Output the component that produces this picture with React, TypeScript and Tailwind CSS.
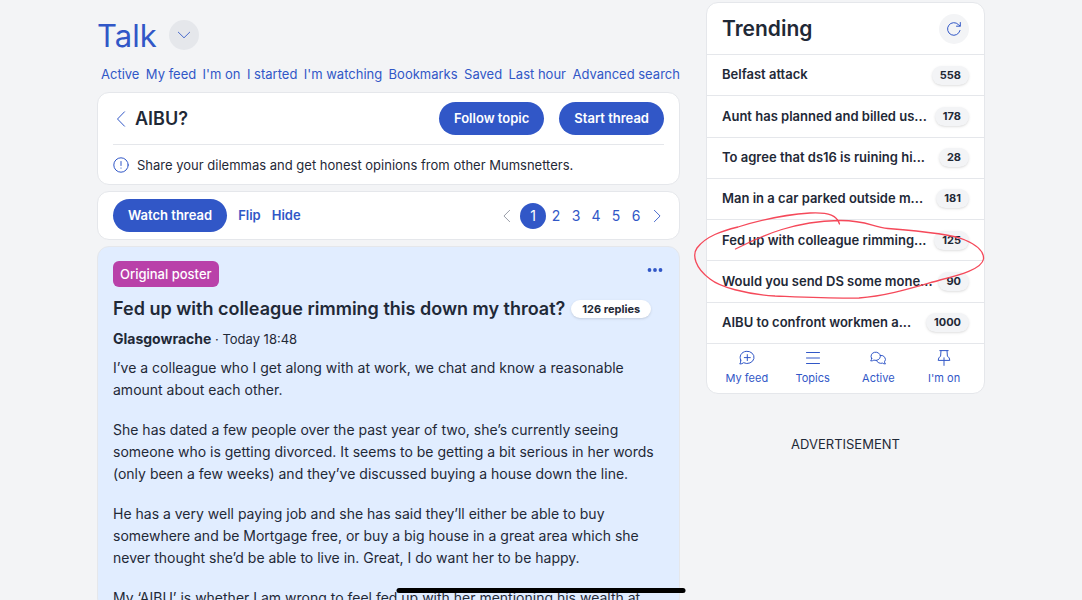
import React from "react";

const navLinks = ["Active", "My feed", "I'm on", "I started", "I'm watching", "Bookmarks", "Saved", "Last hour", "Advanced search"];

const trending = [
  { title: "Belfast attack", count: 558 },
  { title: "Aunt has planned and billed us...", count: 178 },
  { title: "To agree that ds16 is ruining hi...", count: 28 },
  { title: "Man in a car parked outside m...", count: 181 },
  { title: "Fed up with colleague rimming...", count: 125 },
  { title: "Would you send DS some mone...", count: 90 },
  { title: "AIBU to confront workmen a...", count: 1000 },
];

const paragraphs = [
  "I’ve a colleague who I get along with at work, we chat and know a reasonable amount about each other.",
  "She has dated a few people over the past year of two, she’s currently seeing someone who is getting divorced. It seems to be getting a bit serious in her words (only been a few weeks) and they’ve discussed buying a house down the line.",
  "He has a very well paying job and she has said they’ll either be able to buy somewhere and be Mortgage free, or buy a big house in a great area which she never thought she’d be able to live in. Great, I do want her to be happy.",
  "My ‘AIBU’ is whether I am wrong to feel fed up with her mentioning his wealth at",
];

type IconProps = { className?: string; children: React.ReactNode };

function Icon({ className = "size-4", children }: IconProps) {
  return (
    <svg viewBox="0 0 16 16" fill="none" stroke="currentColor" strokeLinecap="round" strokeLinejoin="round" className={className} aria-hidden="true">
      {children}
    </svg>
  );
}

const shortcuts = [
  {
    label: "My feed",
    icon: (
      <>
        <path d="M1.7 10A7 6.100 0 1 1 4.600 12.700Q3.100 14 .8 14Q2 12.500 1.700 10Z" />
        <path d="M8.300 4.600v6M5.300 7.600h6" />
      </>
    ),
  },
  { label: "Topics", icon: <path d="M1.500 2.500h13M1.500 8h13M1.500 13.500h13" /> },
  {
    label: "Active",
    icon: (
      <>
        <path d="M1.600 8.400A4.700 4.100 0 1 1 3.900 10.100Q2.600 11 .7 10.900Q1.600 9.800 1.600 8.400Z" />
        <path d="M10.400 5.400a4.400 4 0 0 1 4.100 6.400q0 1.200 1 2.100q-1.800.1-3-.8a4.600 4 0 0 1-6-2.600" />
      </>
    ),
  },
  { label: "I'm on", icon: <path d="M3.800.6h8.400M5 .8L4.600 6.100Q2.200 7.600 2.200 10.400h11.600Q13.800 7.600 11.400 6.100L11 .8M8 7.800v7.600" /> },
];

function Pill({ children }: { children: React.ReactNode }) {
  return (
    <button className="h-[33px] rounded-full bg-[#3157c7] px-[15px] text-[13px] font-semibold text-white">{children}</button>
  );
}

export default function App() {
  return (
    <div className="h-screen overflow-hidden bg-[#f3f4f6] font-['Inter','Liberation_Sans',sans-serif] text-[#1f2937]">
      <div className="mx-auto flex max-w-[888px] items-start gap-[26px]">
        <main className="min-w-0 flex-1">
          <header className="flex items-center gap-3 pt-5">
            <h1 className="h-[30px] text-[31px] leading-8 text-[#3157c7]">Talk</h1>
            <button aria-label="Choose section" className="flex size-[30px] items-center justify-center rounded-full bg-[#e5e7eb] text-[#3157c7]">
              <Icon className="size-3.5"><path d="M1.500 4.800L8 11.200l6.500-6.400" /></Icon>
            </button>
          </header>
          <nav className="mt-3.5 flex justify-between pl-1 text-[13px] leading-5 text-[#3157c7]">
            {navLinks.map((l) => (
              <a key={l} href="#" className="whitespace-nowrap">{l}</a>
            ))}
          </nav>

          <section className="mt-2 rounded-xl border border-[#e5e7eb] bg-white px-[15px]">
            <div className="flex items-center gap-[15px] border-b border-[#e5e7eb] py-[9px]">
              <a href="#" className="flex flex-1 items-center gap-1.5 text-lg font-semibold">
                <Icon className="size-4 text-[#3157c7]"><path d="M11.500 .8L4.500 8l7 7.200" /></Icon>
                AIBU?
              </a>
              <Pill>Follow topic</Pill>
              <Pill>Start thread</Pill>
            </div>
            <div className="flex items-center gap-2 pt-[11px] pb-[10px] text-[13px] leading-[18px]">
              <Icon className="size-4 text-[#3157c7]">
                <circle cx="8" cy="8" r="7.200" />
                <path d="M8 4.500v4M8 11v.2" />
              </Icon>
              <p>Share your dilemmas and get honest opinions from other Mumsnetters.</p>
            </div>
          </section>

          <section className="mt-1.5 flex items-center rounded-xl border border-[#e5e7eb] bg-white px-[15px] py-[7px] text-[#3157c7]">
            <Pill>Watch thread</Pill>
            <button className="ml-[11px] text-[13px] font-semibold">Flip</button>
            <button className="ml-[11px] text-[13px] font-semibold">Hide</button>
            <nav aria-label="Pages" className="ml-auto flex items-center text-sm">
              <button aria-label="Previous page" className="mr-1.5 text-[#8b909b]">
                <Icon className="size-3.5"><path d="M11 1.500L4.500 8l6.500 6.500" /></Icon>
              </button>
              <a href="#" aria-current="page" className="flex size-[26px] items-center justify-center rounded-full bg-[#3157c7] text-white">1</a>
              {[2, 3, 4, 5, 6].map((n) => (
                <a key={n} href="#" className="w-5 text-center">{n}</a>
              ))}
              <button aria-label="Next page" className="ml-1">
                <Icon className="size-3.5"><path d="M5 1.500L11.500 8L5 14.500" /></Icon>
              </button>
            </nav>
          </section>

          <article className="mt-1.5 rounded-xl border border-[#e5e7eb] bg-[#e1edff] px-[15px] pt-3.5">
            <div className="flex items-start justify-between">
              <span className="rounded-md bg-[#b941a9] px-[7px] text-[13px] leading-[26px] font-medium text-white">Original poster</span>
              <button aria-label="More options" className="text-[#3157c7]">
                <svg viewBox="0 0 18 18" fill="currentColor" className="size-[18px]" aria-hidden="true">
                  <circle cx="3.500" cy="9" r="1.900" />
                  <circle cx="9" cy="9" r="1.900" />
                  <circle cx="14.500" cy="9" r="1.900" />
                </svg>
              </button>
            </div>
            <h2 className="mt-2 flex items-center gap-1.5 text-lg leading-7 font-semibold whitespace-nowrap">
              Fed up with colleague rimming this down my throat?
              <span className="rounded-full bg-white px-[11px] text-[11px] leading-[18px] font-bold shadow-sm">126 replies</span>
            </h2>
            <p className="mt-1 text-[13px] leading-6">
              <b className="text-sm font-bold">Glasgowrache</b> · Today 18:48
            </p>
            <div className="mt-1.5 flex flex-col gap-[18px] text-sm leading-[22px]">
              {paragraphs.map((p) => (
                <p key={p}>{p}</p>
              ))}
            </div>
          </article>
        </main>

        <aside className="w-[279px] shrink-0 pt-0.5">
          <section className="relative rounded-xl border border-[#e5e7eb] bg-white">
            <header className="flex items-center justify-between px-[15px] pt-[11px] pb-[10px]">
              <h2 className="text-[21px] leading-[30px] font-semibold">Trending</h2>
              <button aria-label="Refresh" className="flex size-[30px] items-center justify-center rounded-full bg-[#f3f4f6] text-[#3157c7]">
                <Icon className="size-4"><path d="M14 9.500A6.300 6.300 0 1 1 12.500 3.700L14 5M14.300 1.500V5.200H10.500" /></Icon>
              </button>
            </header>
            <ul className="grid min-h-[289px] auto-rows-fr text-[13px] font-semibold">
              {trending.map((t) => (
                <li key={t.title} className="flex items-center justify-between border-t border-[#e5e7eb] px-[15px]">
                  <a href="#" className="whitespace-nowrap">{t.title}</a>
                  <span className="rounded-full bg-[#f3f4f6] px-2 text-[11px] leading-[19px] font-bold shadow-sm">{t.count}</span>
                </li>
              ))}
            </ul>
            <nav className="grid grid-cols-4 border-t border-[#e5e7eb] px-[7px] pt-1.5 pb-[7px] text-[#3157c7]">
              {shortcuts.map((s) => (
                <a key={s.label} href="#" className="flex flex-col items-center gap-1 text-[11px] leading-4">
                  <Icon className="size-4">{s.icon}</Icon>
                  {s.label}
                </a>
              ))}
            </nav>
            <svg viewBox="0 0 300 110" fill="none" stroke="#f5495a" strokeWidth="1.300" strokeLinecap="round" className="pointer-events-none absolute top-[197px] -left-[17px] w-[300px] max-w-none" aria-hidden="true">
              <path d="M45.500 49C75 34 105 21.500 149 20.500C176 20 182 27 198 28.500C230 31 262 34 275 40C289 46 294 53 293.500 59C292 69 270 75 250 80C225 87 198 96 169 98C140 98.500 110 97 85 96C55 94 30 87 20 79C5 68 2 55 7 48C16 36 32 31 48 27C67 21 90 15 120 13C140 12 147 16 149.500 24" />
            </svg>
          </section>
          <p className="mt-10 text-center text-[13px] leading-5">ADVERTISEMENT</p>
        </aside>
      </div>
      <div className="fixed bottom-[7px] left-1/2 h-[5px] w-[289px] -translate-x-1/2 rounded-full bg-black" />
    </div>
  );
}
